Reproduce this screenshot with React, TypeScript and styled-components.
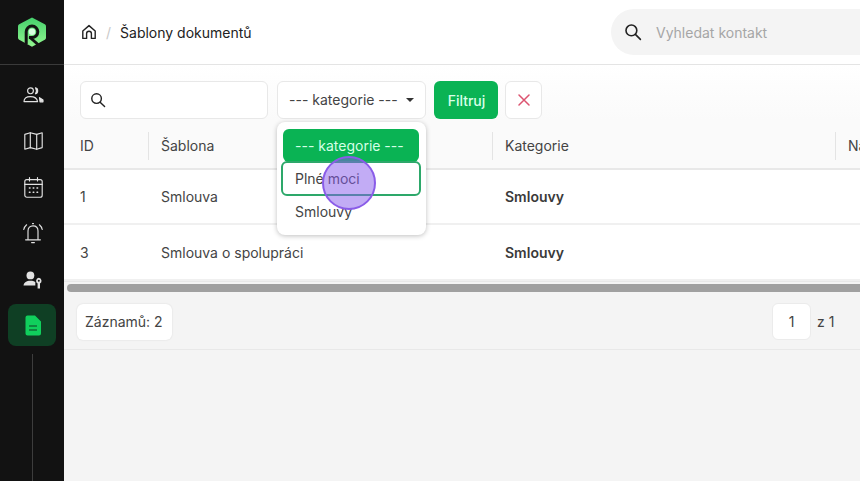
import React from "react";
import styled, { createGlobalStyle } from "styled-components";

const GlobalStyle = createGlobalStyle`
  html, body { margin: 0; padding: 0; height: 100%; overflow: hidden; }
  body { font-family: "Inter", "Liberation Sans", sans-serif; background: #f4f4f4; }
  #root { height: 100%; }
`;

const Page = styled.div`
  display: flex;
  width: 860px;
  height: 481px;
  overflow: hidden;
`;

const Sidebar = styled.aside`
  width: 64px;
  flex: none;
  display: flex;
  flex-direction: column;
  align-items: center;
  background: #121212;
`;

const LogoBox = styled.div`
  width: 100%;
  height: 65px;
  flex: none;
  display: flex;
  align-items: center;
  justify-content: center;
  border-bottom: 1px solid #3a3a3a;
  box-sizing: border-box;
`;

const NavList = styled.nav`
  display: flex;
  flex-direction: column;
  align-items: center;
  padding-top: 7px;
`;

const NavItem = styled.div<{ $active?: boolean; $h?: number }>`
  width: 48px;
  height: ${(p) => p.$h ?? 46}px;
  box-sizing: border-box;
  padding-left: 2px;
  display: flex;
  align-items: center;
  justify-content: center;
  border-radius: 8px;
  background: ${(p) => (p.$active ? "#0f3f24" : "transparent")};
  color: ${(p) => (p.$active ? "#10cf5c" : "#e2e2e2")};
`;

const NavLine = styled.div`
  width: 1px;
  flex: 1;
  margin-top: 8px;
  background: #3d3d3d;
`;

const Main = styled.main`
  flex: 1;
  min-width: 0;
  display: flex;
  flex-direction: column;
`;

const Header = styled.header`
  height: 65px;
  flex: none;
  box-sizing: border-box;
  display: flex;
  align-items: center;
  padding-left: 17px;
  background: #fff;
  border-bottom: 1px solid #e4e4e4;
`;

const Crumbs = styled.div`
  display: flex;
  align-items: center;
  flex: none;
  width: 530px;
  color: #222;
  font-size: 14px;
`;

const Slash = styled.span`
  color: #c9c9c9;
  margin: 0 9px 0 9px;
`;

const GlobalSearch = styled.div`
  flex: none;
  width: 300px;
  height: 46px;
  display: flex;
  align-items: center;
  gap: 14px;
  padding-left: 13px;
  box-sizing: border-box;
  border-radius: 23px 0 0 23px;
  background: #f4f4f4;
  font-size: 14px;
  color: #a6a6a6;
`;

const Toolbar = styled.div`
  height: 55px;
  flex: none;
  box-sizing: border-box;
  display: flex;
  gap: 8px;
  padding: 16px 0 0 16px;
  background: linear-gradient(#ffffff, #fafafa);
`;

const Field = styled.div<{ $w: number }>`
  width: ${(p) => p.$w}px;
  height: 38px;
  box-sizing: border-box;
  flex: none;
  display: flex;
  align-items: center;
  background: #fff;
  border: 1px solid #e8e8e8;
  border-radius: 6px;
  color: #444;
  font-size: 14px;
  padding: 0 12px 0 9px;
`;

const SelectField = styled(Field)`
  margin-left: 1px;
  padding: 0 11px 1px 11px;
  justify-content: space-between;
  position: relative;
`;

const Caret = styled.span`
  width: 0;
  height: 0;
  border-left: 4px solid transparent;
  border-right: 4px solid transparent;
  border-top: 4px solid #333;
`;

const FilterButton = styled.button`
  width: 64px;
  height: 38px;
  flex: none;
  border: none;
  border-radius: 6px;
  background: #0ab354;
  color: #d8ffe8;
  font: 500 14px "Inter", sans-serif;
  padding: 0 0 0 1px;
`;

const ClearButton = styled.button`
  width: 37px;
  height: 38px;
  flex: none;
  margin-left: -1px;
  display: flex;
  align-items: center;
  justify-content: center;
  padding: 0;
  border: 1px solid #e8e8e8;
  border-radius: 6px;
  background: #fff;
  color: #dc5470;
`;

const HeadRow = styled.div`
  height: 50px;
  flex: none;
  display: flex;
  box-sizing: border-box;
  align-items: center;
  padding-top: 4px;
  background: #fafafa;
  border-bottom: 2px solid #e8e8e8;
  color: #444;
  font-size: 14px;
`;

const HeadCell = styled.div<{ $w: number; $first?: boolean }>`
  width: ${(p) => p.$w}px;
  flex: none;
  height: 28px;
  line-height: 28px;
  box-sizing: border-box;
  padding-left: ${(p) => (p.$first ? 16 : 12)}px;
  border-left: ${(p) => (p.$first ? "none" : "1px solid #e4e4e4")};
  white-space: nowrap;
`;

const Row = styled.div<{ $h: number }>`
  height: ${(p) => p.$h}px;
  flex: none;
  box-sizing: border-box;
  display: flex;
  align-items: center;
  background: #fff;
  border-bottom: 2px solid #f0f0f0;
  color: #444;
  font-size: 14px;
`;

const Cell = styled.div<{ $w: number; $pad: number; $bold?: boolean }>`
  width: ${(p) => p.$w}px;
  flex: none;
  box-sizing: border-box;
  padding-left: ${(p) => p.$pad}px;
  font-weight: ${(p) => (p.$bold ? 600 : 400)};
  color: ${(p) => (p.$bold ? "#3a3a3a" : "#444")};
`;

const ScrollArea = styled.div`
  height: 11px;
  flex: none;
  display: flex;
  align-items: flex-end;
  padding-left: 3px;
  background: #f4f4f4;
  box-sizing: border-box;
  border-top: 1px solid #e8e8e8;
`;

const ScrollThumb = styled.div`
  flex: 1;
  height: 8px;
  border-radius: 4px 0 0 4px;
  background: #a0a0a0;
`;

const Footer = styled.div`
  height: 58px;
  flex: none;
  box-sizing: border-box;
  display: flex;
  align-items: flex-start;
  justify-content: space-between;
  padding: 12px 0 0 13px;
  background: #f4f4f4;
  border-bottom: 1px solid #e8e8e8;
  color: #444;
  font-size: 14px;
`;

const CountChip = styled.div`
  height: 36px;
  display: flex;
  align-items: center;
  padding: 0 9px 1px 8px;
  box-sizing: border-box;
  background: #fff;
  border-radius: 6px;
  box-shadow: 0 0 2px rgba(0, 0, 0, 0.12);
`;

const Pager = styled.div`
  display: flex;
  align-items: center;
  gap: 6px;
  width: 88px;
  height: 37px;
  margin-top: -1px;
`;

const PageBox = styled.div`
  width: 39px;
  height: 37px;
  display: flex;
  align-items: center;
  justify-content: center;
  background: #fff;
  border: 1px solid #ebebeb;
  border-radius: 6px;
  box-sizing: border-box;
`;

const Body = styled.div`
  flex: 1;
  background: #f4f4f4;
`;

const Dropdown = styled.div`
  position: absolute;
  left: -1px;
  top: 40px;
  width: 149px;
  height: 113px;
  box-sizing: border-box;
  background: #fff;
  border-radius: 8px;
  box-shadow: 0 1px 5px rgba(0, 0, 0, 0.25);
  padding: 7px 7px 0 6px;
  z-index: 5;
`;

const Option = styled.div<{ $selected?: boolean; $focus?: boolean }>`
  height: ${(p) => (p.$selected ? 33 : p.$focus ? 35 : 30)}px;
  box-sizing: border-box;
  display: flex;
  align-items: center;
  padding-left: 12px;
  border-radius: 6px;
  font-size: 14px;
  color: ${(p) => (p.$selected ? "#d5ffe6" : "#444")};
  background: ${(p) => (p.$selected ? "#0ab354" : "#fff")};
  border: ${(p) => (p.$focus ? "2px solid #2da86a" : "none")};
  margin: ${(p) => (p.$focus ? "-1px -2px 0 -2px" : "0")};
`;

const CursorDot = styled.div`
  position: absolute;
  left: 322px;
  top: 156px;
  width: 54px;
  height: 54px;
  box-sizing: border-box;
  border-radius: 50%;
  background: rgba(134, 90, 235, 0.5);
  border: 2px solid #8a5ce8;
  z-index: 10;
`;

const Logo = () => (
  <svg width="28" height="30" viewBox="0 0 28 30">
    <defs>
      <linearGradient id="lg" x1="0" y1="0" x2="0" y2="1">
        <stop offset="0" stopColor="#45cf6c" />
        <stop offset="1" stopColor="#92f78f" />
      </linearGradient>
    </defs>
    <path
      d="M14 0.5 L26.8 7.2 Q28 7.9 28 9.2 V20.8 Q28 22.1 26.8 22.8 L14 29.7 L1.2 22.8 Q0 22.1 0 20.8 V9.2 Q0 7.9 1.2 7.2 Z"
      fill="url(#lg)"
    />
    <path d="M8.2 27 V14.8 A5.8 5.8 0 1 1 14 20.6 H11" fill="none" stroke="#121212" strokeWidth="3" />
    <path d="M11.5 20 L20 27.5" fill="none" stroke="#121212" strokeWidth="3" />
    <circle cx="14" cy="14.8" r="3.2" fill="#d8ffe0" />
  </svg>
);

const SearchIcon = ({ size = 18, color = "#222" }: { size?: number; color?: string }) => (
  <svg width={size} height={size} viewBox="0 0 18 18" fill="none" stroke={color} strokeWidth="1.6" strokeLinecap="round">
    <circle cx="7.4" cy="7.4" r="5.4" />
    <path d="M11.4 11.4 L16.4 16.4" />
  </svg>
);

const stroke = { fill: "none", stroke: "currentColor", strokeWidth: 1.15, strokeLinecap: "round", strokeLinejoin: "round" } as const;

const ContactsIcon = () => (
  <svg width="21" height="16" viewBox="0 0 21 16" {...stroke}>
    <circle cx="7.5" cy="3.8" r="2.9" />
    <path d="M1 14.6 C1 11.4 3.6 9.6 7.5 9.6 C11.2 9.6 14 11.2 14.6 14.6 Z" />
    <path d="M12.5 0.8 C15.4 1.3 15.4 6.3 12.5 6.8 C13.6 5 13.6 2.6 12.5 0.8 Z" fill="currentColor" />
    <path d="M16.5 10.6 L20 13 V14.8 H17 Z" fill="currentColor" />
  </svg>
);

const MapIcon = () => (
  <svg width="19" height="18" viewBox="0 0 19 18" {...stroke}>
    <path d="M0.8 2.4 L6.3 0.8 L12.7 2.4 L18.2 0.8 V15.6 L12.7 17.2 L6.3 15.6 L0.8 17.2 Z" />
    <path d="M6.3 0.8 V15.6 M12.7 2.4 V17.2" />
  </svg>
);

const CalendarIcon = () => (
  <svg width="19" height="21" viewBox="0 0 19 21" {...stroke}>
    <rect x="0.8" y="2.6" width="17.4" height="17.6" rx="2" />
    <path d="M0.8 7.4 H18.2 M5.5 0.6 V4 M13.5 0.6 V4" />
    <path d="M5.4 11 H6 M9.2 11 H9.8 M13 11 H13.6 M5.4 15.2 H6 M9.2 15.2 H9.8 M13 15.2 H13.6" strokeWidth="1.5" />
  </svg>
);

const BellIcon = () => (
  <svg width="20" height="22" viewBox="0 0 20 22" {...stroke}>
    <path d="M5 17.5 V9 C5 5.8 7 3.8 10 3.8 C13 3.8 15 5.8 15 9 V17.5" />
    <path d="M2.6 17.8 H17.4 M8.6 20.6 H11.4 M9.5 1.6 H10.5" />
    <path d="M3.6 2.8 C2.2 4 1.2 5.5 0.8 7.5 M16.4 2.8 C17.8 4 18.8 5.5 19.2 7.5" />
  </svg>
);

const UserKeyIcon = () => (
  <svg width="20" height="18" viewBox="0 0 20 18" fill="currentColor">
    <circle cx="7.4" cy="4.4" r="3.9" />
    <path d="M0.5 14.5 C0.8 11.5 3.5 9.8 7.4 9.8 C9.5 9.8 11 10.2 12.3 11 V14.5 Z" />
    <path d="M15.8 6.8 A3 3 0 0 1 17 12.4 V17.6 H14.6 V12.4 A3 3 0 0 1 15.8 6.8 Z M15.8 8.7 A1 1 0 1 0 15.8 10.7 A1 1 0 1 0 15.8 8.7 Z" fillRule="evenodd" />
  </svg>
);

const DocIcon = () => (
  <svg width="16" height="21" viewBox="0 0 16 21">
    <path d="M2.5 0.5 H10 L16 6.5 V18.5 A2 2 0 0 1 14 20.5 H2.5 A2 2 0 0 1 0.5 18.5 V2.5 A2 2 0 0 1 2.5 0.5 Z" fill="currentColor" />
    <path d="M4 11 H12 M4 15 H12" stroke="#0f3f24" strokeWidth="1.2" />
  </svg>
);

const HomeIcon = () => (
  <svg width="16" height="16" viewBox="0 0 16 16" fill="none" stroke="#222" strokeWidth="1.4" strokeLinejoin="round">
    <path d="M1.8 7 L8 1.6 L14.2 7 V14.4 H10.4 V9.6 A2.4 2.4 0 0 0 5.6 9.6 V14.4 H1.8 Z" />
  </svg>
);

const CloseIcon = () => (
  <svg width="12" height="12" viewBox="0 0 12 12" fill="none" stroke="currentColor" strokeWidth="1.5" strokeLinecap="round">
    <path d="M1 1 L11 11 M11 1 L1 11" />
  </svg>
);

export default function App() {
  return (
    <Page>
      <GlobalStyle />
      <Sidebar>
        <LogoBox>
          <Logo />
        </LogoBox>
        <NavList>
          <NavItem><ContactsIcon /></NavItem>
          <NavItem><MapIcon /></NavItem>
          <NavItem><CalendarIcon /></NavItem>
          <NavItem><BellIcon /></NavItem>
          <NavItem $h={48}><UserKeyIcon /></NavItem>
          <NavItem $active $h={42}><DocIcon /></NavItem>
        </NavList>
        <NavLine />
      </Sidebar>
      <Main>
        <Header>
          <Crumbs>
            <HomeIcon />
            <Slash>/</Slash>
            <span>Šablony dokumentů</span>
          </Crumbs>
          <GlobalSearch>
            <SearchIcon />
            <span>Vyhledat kontakt</span>
          </GlobalSearch>
        </Header>
        <Toolbar>
          <Field $w={188}>
            <SearchIcon size={16} />
          </Field>
          <SelectField $w={149}>
            <span>--- kategorie ---</span>
            <Caret />
            <Dropdown>
              <Option $selected>--- kategorie ---</Option>
              <Option $focus>Plné moci</Option>
              <Option>Smlouvy</Option>
            </Dropdown>
          </SelectField>
          <FilterButton>Filtruj</FilterButton>
          <ClearButton>
            <CloseIcon />
          </ClearButton>
        </Toolbar>
        <HeadRow>
          <HeadCell $first $w={84}>ID</HeadCell>
          <HeadCell $w={344}>Šablona</HeadCell>
          <HeadCell $w={343}>Kategorie</HeadCell>
          <HeadCell $w={60}>Název</HeadCell>
        </HeadRow>
        <Row $h={55}>
          <Cell $w={97} $pad={16}>1</Cell>
          <Cell $w={344} $pad={0}>Smlouva</Cell>
          <Cell $w={200} $pad={0} $bold>Smlouvy</Cell>
        </Row>
        <Row $h={56}>
          <Cell $w={97} $pad={16}>3</Cell>
          <Cell $w={344} $pad={0}>Smlouva o spolupráci</Cell>
          <Cell $w={200} $pad={0} $bold>Smlouvy</Cell>
        </Row>
        <ScrollArea>
          <ScrollThumb />
        </ScrollArea>
        <Footer>
          <CountChip>Záznamů: 2</CountChip>
          <Pager>
            <PageBox>1</PageBox>
            <span>z 1</span>
          </Pager>
        </Footer>
        <Body />
      </Main>
      <CursorDot />
    </Page>
  );
}
